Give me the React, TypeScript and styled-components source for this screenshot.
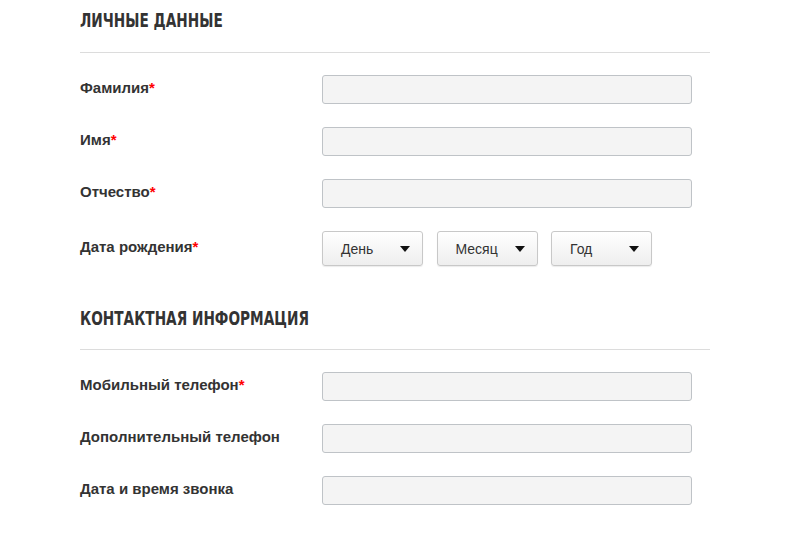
import React from 'react'
import styled, { createGlobalStyle } from 'styled-components'

const GlobalStyle = createGlobalStyle`
    html, body {
        margin: 0;
        padding: 0;
        background: #fff;
        font-family: 'Liberation Sans', Arial, sans-serif;
        color: #333;
    }
`

type Field = { label: string; required?: boolean }

const personal: Field[] = [
    { label: 'Фамилия', required: true },
    { label: 'Имя', required: true },
    { label: 'Отчество', required: true },
]

const contacts: Field[] = [
    { label: 'Мобильный телефон', required: true },
    { label: 'Дополнительный телефон' },
    { label: 'Дата и время звонка' },
]

function Label({ label, required }: Field) {
    return (
        <FieldLabel>
            {label}
            {required && <Star>*</Star>}
        </FieldLabel>
    )
}

function Select({ text }: { text: string }) {
    return (
        <SelectBox type='button'>
            <span>{text}</span>
            <Caret />
        </SelectBox>
    )
}

function App() {
    return (
        <>
            <GlobalStyle />
            <Page>
                <Section>
                    <Heading><HeadingText>Личные данные</HeadingText></Heading>
                    <Rows>
                        {personal.map((f) => (
                            <Row key={f.label}>
                                <Label {...f} />
                                <Input />
                            </Row>
                        ))}
                        <Row>
                            <Label label='Дата рождения' required />
                            <Selects>
                                <Select text='День' />
                                <Select text='Месяц' />
                                <Select text='Год' />
                            </Selects>
                        </Row>
                    </Rows>
                </Section>
                <Section $top={32}>
                    <Heading $pad={11}><HeadingText>Контактная информация</HeadingText></Heading>
                    <Rows>
                        {contacts.map((f) => (
                            <Row key={f.label}>
                                <Label {...f} />
                                <Input />
                            </Row>
                        ))}
                    </Rows>
                </Section>
            </Page>
        </>
    )
}

export default App

const Page = styled.main`
    width: 630px;
    padding: 0 0 30px 80px;
`

const Section = styled.section<{ $top?: number }>`
    margin-top: ${(p) => p.$top ?? 0}px;
`

const Heading = styled.h2<{ $pad?: number }>`
    margin: 0;
    padding-bottom: ${(p) => p.$pad ?? 12}px;
    line-height: 40px;
    font-family: 'DejaVu Sans Condensed', 'DejaVu Sans', sans-serif;
    font-weight: 700;
    font-size: 19px;
    text-transform: uppercase;
    color: #333;
    border-bottom: 1px solid #dcdcdc;
    white-space: nowrap;
`

// the original uses a narrow DIN-like face, squeeze the condensed one a bit more
const HeadingText = styled.span`
    display: inline-block;
    transform: scaleX(0.8);
    transform-origin: left center;
`

const Rows = styled.div`
    display: flex;
    flex-direction: column;
    gap: 23px;
    padding-top: 22px;
`

const Row = styled.div`
    display: grid;
    grid-template-columns: 242px 370px;
    align-items: center;
`

const FieldLabel = styled.label`
    font-size: 15px;
    font-weight: 700;
    line-height: 18px;
    color: #333;
    margin-top: -4px;
`

const Star = styled.span`
    color: #f00;
`

const Input = styled.input`
    box-sizing: border-box;
    width: 370px;
    height: 29px;
    margin: 0;
    background: #f4f4f4;
    border: 1px solid #bfc3c7;
    border-radius: 3px;
    outline: none;
`

const Selects = styled.div`
    display: flex;
    gap: 13.5px;
`

const SelectBox = styled.button`
    box-sizing: border-box;
    width: 101px;
    height: 35px;
    margin: 0;
    padding: 0 12px 0 18px;
    display: flex;
    align-items: center;
    justify-content: space-between;
    background: linear-gradient(#ffffff, #eeeeee);
    border: 1px solid #c8c8c8;
    border-radius: 3px;
    box-shadow: 0 1px 1px rgba(0, 0, 0, 0.08);
    font-family: 'Liberation Sans Narrow', 'Liberation Sans', Arial, sans-serif;
    font-size: 14px;
    color: #333;
    cursor: pointer;
`

const Caret = styled.i`
    width: 0;
    height: 0;
    border-left: 5px solid transparent;
    border-right: 5px solid transparent;
    border-top: 6px solid #111;
`
